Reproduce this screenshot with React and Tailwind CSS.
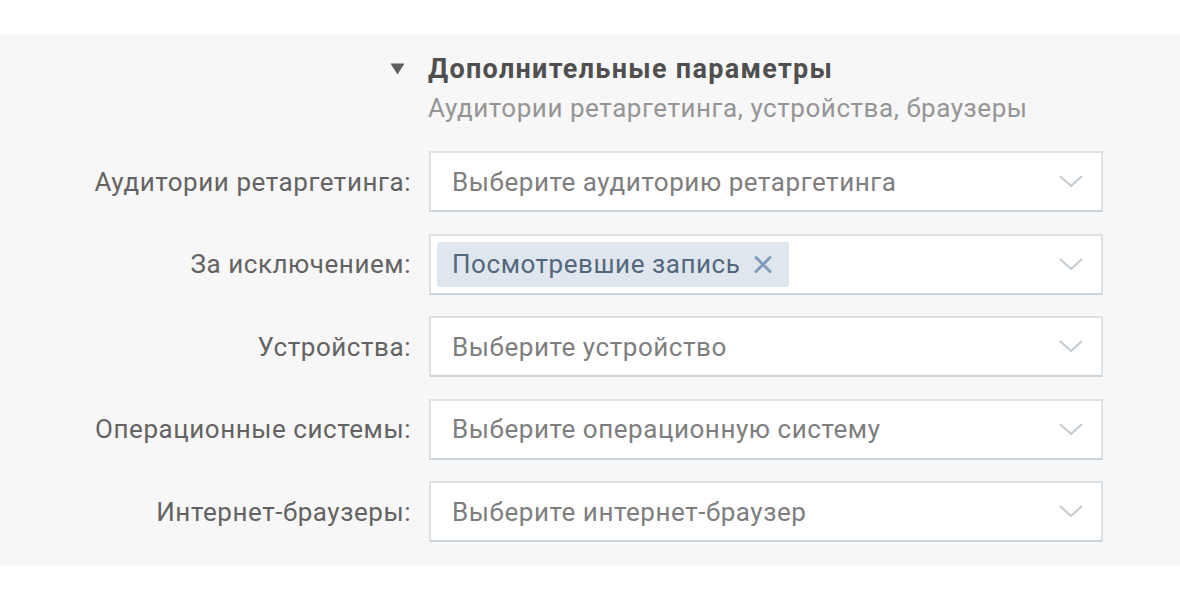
import React from 'react';

const rows = [
    { label: 'Аудитории ретаргетинга:', placeholder: 'Выберите аудиторию ретаргетинга' },
    { label: 'За исключением:', tag: 'Посмотревшие запись' },
    { label: 'Устройства:', placeholder: 'Выберите устройство' },
    { label: 'Операционные системы:', placeholder: 'Выберите операционную систему' },
    { label: 'Интернет-браузеры:', placeholder: 'Выберите интернет-браузер' },
];

function Chevron() {
    return (
        <svg width="24" height="13" viewBox="0 0 24 13" fill="none" className="shrink-0">
            <path d="M1.5 1.5 L12 11 L22.5 1.5" stroke="#c3cad1" strokeWidth="2" strokeLinecap="round" strokeLinejoin="round" />
        </svg>
    );
}

function Select({ placeholder, tag }) {
    return (
        <div className="h-[61px] bg-white border-2 border-[#dce1e6] border-b-[#cbd3db] flex items-center pr-[18px]">
            {tag ? (
                <div className="ml-[6px] h-[45px] pl-[15px] pr-[16px] rounded-[3px] bg-[#dfe6ed] flex items-center gap-[13px] text-[#55677d]">
                    <span>{tag}</span>
                    <svg width="20" height="19" viewBox="0 0 20 19" className="mt-[1px]">
                        <path d="M3 2.5 L17 16.5 M17 2.5 L3 16.5" stroke="#809bb9" strokeWidth="3" strokeLinecap="round" />
                    </svg>
                </div>
            ) : (
                <span className="pl-[21px] text-[#7e7e7e]">{placeholder}</span>
            )}
            <div className="ml-auto">
                <Chevron />
            </div>
        </div>
    );
}

export default function App() {
    return (
        <div className="min-h-screen bg-white pt-[34px] text-[26px] leading-[30px] tracking-[0.55px]" style={{ fontFamily: 'Roboto, "Liberation Sans", sans-serif' }}>
            <div className="bg-[#f7f7f7] pt-[20px] pb-[23px]">
                {/* header */}
                <div className="grid grid-cols-[411px_674px] gap-x-[17px]">
                    <div className="flex justify-end pt-[9px] pr-[6px]">
                        <svg width="15" height="12" viewBox="0 0 15 12">
                            <path d="M0.5 0.5 H14.5 L7.5 11.5 Z" fill="#5f5f5f" />
                        </svg>
                    </div>
                    <div>
                        <div className="text-[27px] font-bold tracking-[1.3px] text-[#4f4f4f]">Дополнительные параметры</div>
                        <div className="mt-[9px] text-[#959595]">Аудитории ретаргетинга, устройства, браузеры</div>
                    </div>
                </div>

                {/* rows */}
                <div className="mt-[28px] grid grid-cols-[411px_674px] gap-x-[18px] gap-y-[21.5px]">
                    {rows.map((r) => (
                        <React.Fragment key={r.label}>
                            <div className="flex items-center justify-end text-[#636363]">{r.label}</div>
                            <Select placeholder={r.placeholder} tag={r.tag} />
                        </React.Fragment>
                    ))}
                </div>
            </div>
        </div>
    );
}
